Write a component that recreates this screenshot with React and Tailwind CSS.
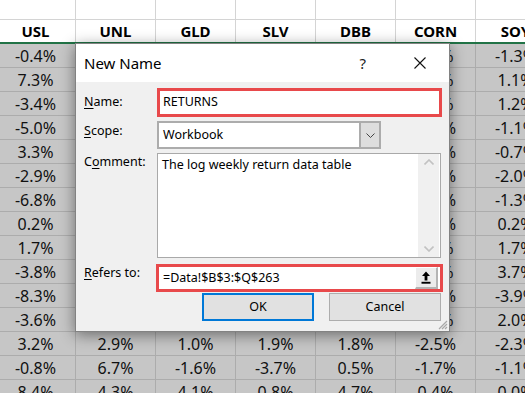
import React from "react";

const cols = ["USL", "UNL", "GLD", "SLV", "DBB", "CORN", "SOY"];
const data = [
  ["-0.4", "2.1", "0.8", "1.2", "-0.9", "0.6", "-1.3"],
  ["7.3", "3.2", "1.5", "2.4", "1.1", "1.9", "1.1"],
  ["-3.4", "-1.8", "0.4", "-0.6", "-1.2", "0.8", "1.2"],
  ["-5.0", "-2.7", "-1.1", "-2.3", "-1.5", "-0.9", "-1.1"],
  ["3.3", "1.4", "0.9", "1.6", "0.7", "-1.4", "-0.7"],
  ["-2.9", "-1.9", "0.3", "0.2", "-0.4", "-2.6", "-2.0"],
  ["-6.8", "-4.1", "-0.7", "-1.9", "-2.1", "-1.8", "-1.3"],
  ["0.2", "0.6", "1.2", "0.5", "0.3", "-0.5", "0.2"],
  ["1.7", "1.1", "0.8", "1.3", "0.9", "1.2", "1.7"],
  ["-3.8", "-2.2", "-0.5", "-1.0", "-0.6", "4.1", "3.7"],
  ["-8.3", "-5.4", "-0.9", "-2.8", "-3.0", "-3.6", "-3.9"],
  ["-3.6", "-2.0", "0.6", "0.4", "-0.8", "1.5", "2.0"],
  ["3.2", "2.9", "1.0", "1.9", "1.8", "-2.5", "-2.3"],
  ["-0.8", "6.7", "-1.6", "-3.7", "0.5", "-1.7", "-1.1"],
  ["8.4", "4.3", "4.1", "0.8", "4.7", "0.4", "0.0"],
];

function Label({ children, className = "" }) {
  return (
    <div className={"w-[73px] shrink-0 text-black leading-[17px] " + className}>
      {children}
    </div>
  );
}

export default function App() {
  return (
    <div className="relative w-[525px] h-[393px] overflow-hidden bg-white font-['Noto_Sans',sans-serif]">
      {/* Spreadsheet */}
      <div className="-ml-[4px] w-[560px]">
        <div className="flex h-[20px] border-b border-[#d4d4d4]">
          {cols.map((c) => (
            <div key={c} className="w-[80px] shrink-0 border-r border-[#d4d4d4]" />
          ))}
        </div>
        <div className="flex h-[24px] border-b-2 border-[#217346]">
          {cols.map((c) => (
            <div
              key={c}
              className="w-[80px] shrink-0 border-r border-[#d4d4d4] flex items-center justify-center text-[15px] font-bold text-black leading-none pt-[1px]"
            >
              {c}
            </div>
          ))}
        </div>
        {data.map((row, i) => (
          <div key={i} className="flex h-[24px] border-b border-[#acacac] bg-[#c6c6c6]">
            {row.map((v, j) => (
              <div
                key={j}
                className="w-[80px] shrink-0 border-r border-[#acacac] flex items-center justify-center text-[16px] text-[#111] leading-[21px] pt-[2px]"
              >
                {v}%
              </div>
            ))}
          </div>
        ))}
      </div>

      {/* Dialog */}
      <div className="absolute left-[75px] top-[43px] w-[375px] h-[289px] border border-[#828282] bg-[#f0f0f0] shadow-[0_3px_14px_rgba(0,0,0,0.45)] flex flex-col text-black">
        <div className="h-[38px] bg-white flex items-center pl-[8px]">
          <span className="text-[15px] leading-none">New Name</span>
          <span className="ml-auto text-[15px] leading-none text-[#222]">?</span>
          <svg className="ml-[48px] mr-[23px]" width="12" height="12" viewBox="0 0 12 12">
            <path d="M0.5 0.5 L11.5 11.5 M11.5 0.5 L0.5 11.5" stroke="#111" strokeWidth="1.1" fill="none" />
          </svg>
        </div>

        <div className="relative flex-1 flex flex-col pl-[8px] text-[12.5px]">
          {/* Name */}
          <div className="flex mt-[6px] h-[29px]">
            <Label className="pt-[5px]">
              <span className="underline underline-offset-2">N</span>ame:
            </Label>
            <div className="w-[285px] h-[29px] border-[3px] border-[#e8494b] bg-white flex items-center pl-[3px] leading-none">
              RETURNS
            </div>
          </div>

          {/* Scope */}
          <div className="flex mt-[4px] h-[28px]">
            <Label className="pt-[1px]">
              <span className="underline underline-offset-2">S</span>cope:
            </Label>
            <div className="w-[224px] h-[28px] border-2 border-[#acacac] bg-white flex">
              <div className="flex-1 flex items-center pl-[4px] leading-none">Workbook</div>
              <div className="w-[20px] bg-[#dedede] border-l-2 border-[#acacac] flex items-center justify-center">
                <svg width="9" height="5" viewBox="0 0 9 5">
                  <path d="M0.5 0.5 L4.5 4.5 L8.5 0.5" stroke="#444" strokeWidth="1" fill="none" />
                </svg>
              </div>
            </div>
          </div>

          {/* Comment */}
          <div className="flex mt-[4px] h-[105px]">
            <Label>
              C<span className="underline underline-offset-2">o</span>mment:
            </Label>
            <div className="w-[284px] h-[105px] border border-[#a9a9a9] bg-white flex">
              <div className="flex-1 pl-[4px] pt-[2px] leading-[17px]">The log weekly return data table</div>
              <div className="w-[21px] mr-[1px] bg-[#f0f0f0] flex flex-col justify-between items-center py-[5px]">
                <svg width="10" height="6" viewBox="0 0 10 6">
                  <path d="M0.5 5.5 L5 1 L9.5 5.5" stroke="#c2c2c2" strokeWidth="1.6" fill="none" />
                </svg>
                <svg width="10" height="6" viewBox="0 0 10 6">
                  <path d="M0.5 0.5 L5 5 L9.5 0.5" stroke="#c2c2c2" strokeWidth="1.6" fill="none" />
                </svg>
              </div>
            </div>
          </div>

          {/* Refers to */}
          <div className="flex mt-[6px] h-[28px]">
            <Label>
              <span className="underline underline-offset-2">R</span>efers to:
            </Label>
            <div className="-ml-[1px] w-[287px] h-[28px] border-[3px] border-[#e8494b] bg-white flex">
              <div className="flex-1 flex items-center pl-[4px] leading-none pt-[1px]">=Data!$B$3:$Q$263</div>
              <div className="w-[23px] mr-[2px] bg-[#ececec] border-t border-l border-white border-r-2 border-b-2 border-r-[#b4b4b4] border-b-[#b4b4b4] flex items-center justify-center">
                <svg width="10" height="13" viewBox="0 0 10 13">
                  <path d="M5 0.5 L9 5 H6.4 V9.5 H3.6 V5 H1 Z" fill="#000" />
                  <rect x="0.5" y="10.8" width="9" height="1.9" fill="#000" />
                </svg>
              </div>
            </div>
          </div>

          {/* Buttons */}
          <div className="flex justify-end gap-[15px] mt-[1px] pr-[8px]">
            <div className="w-[112px] h-[28px] border-2 border-[#0078d7] bg-[#e1e1e1] flex items-center justify-center leading-none">
              OK
            </div>
            <div className="w-[112px] h-[28px] border border-[#adadad] bg-[#e1e1e1] flex items-center justify-center leading-none">
              Cancel
            </div>
          </div>

          {/* Resize grip */}
          <svg className="absolute right-[1px] bottom-[1px]" width="11" height="11" viewBox="0 0 11 11">
            <path d="M10 2 L2 10 M10 5 L5 10 M10 8 L8 10" stroke="#a8a8a8" strokeWidth="1.2" fill="none" />
          </svg>
        </div>
      </div>
    </div>
  );
}
